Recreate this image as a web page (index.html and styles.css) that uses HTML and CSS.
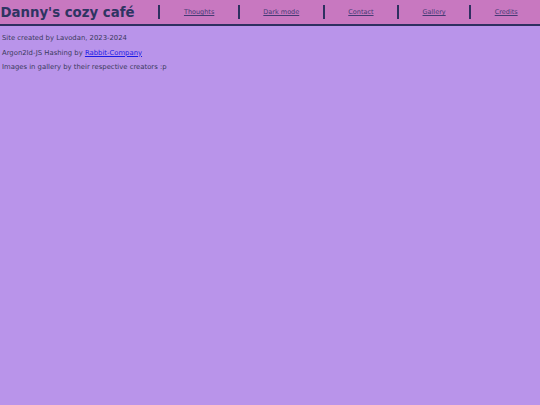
FILE: index.html
```html
<!DOCTYPE html>
<html lang="en">
<head>
<meta charset="utf-8">
<title>Danny's cozy café</title>
<link rel="stylesheet" href="styles.css">
</head>
<body>
<header class="topbar">
  <h1 class="title">Danny's cozy café</h1>
  <nav class="nav">
    <span class="sep"></span><a class="nav-link" href="#">Thoughts</a>
    <span class="sep"></span><a class="nav-link" href="#">Dark mode</a>
    <span class="sep"></span><a class="nav-link" href="#">Contact</a>
    <span class="sep"></span><a class="nav-link" href="#">Gallery</a>
    <span class="sep"></span><a class="nav-link" href="#">Credits</a>
  </nav>
</header>
<main class="content">
  <p class="line">Site created by Lavodan, 2023-2024</p>
  <p class="line">Argon2Id-JS Hashing by <a class="ext" href="#">Rabbit-Company</a></p>
  <p class="line">Images in gallery by their respective creators :p</p>
</main>
</body>
</html>
```
FILE: styles.css
```css
html, body {
  margin: 0;
  padding: 0;
  height: 100%;
}
body {
  background: #b994ea;
  font-family: "DejaVu Sans", Verdana, sans-serif;
  color: #3a3a5c;
}
.topbar {
  display: flex;
  align-items: center;
  height: 24px;
  background: #c878c0;
  border-bottom: 2px solid #2e3060;
}
.title {
  margin: 0 24px 0 0;
  padding-left: 0.5px;
  font-size: 13.3px;
  font-weight: bold;
  color: #2e3462;
  white-space: nowrap;
}
.nav {
  display: flex;
  align-items: center;
  flex: 1;
}
.sep {
  display: block;
  width: 2px;
  height: 14px;
  background: #2e3060;
}
.nav-link {
  padding: 0 23.5px;
  font-size: 6.5px;
  color: #453a74;
  white-space: nowrap;
}
.content {
  padding: 5px 2px;
}
.line {
  margin: 0;
  font-size: 6.85px;
  line-height: 14.5px;
}
.ext {
  color: #1a1ae6;
}
```
